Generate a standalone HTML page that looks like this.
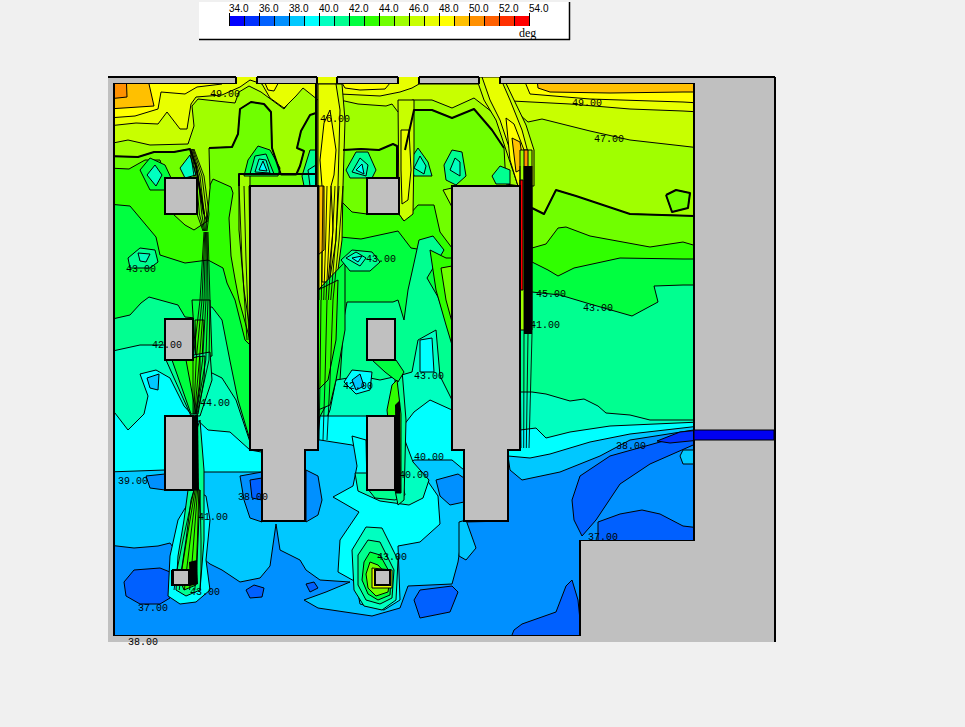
<!DOCTYPE html>
<html><head><meta charset="utf-8"><style>
html,body{margin:0;padding:0;background:#f0f0f0;width:965px;height:727px;overflow:hidden}
svg{position:absolute;left:0;top:0}
text{font-family:"Liberation Mono",monospace;font-size:10px;fill:#000}
.leg text{font-family:"Liberation Sans",sans-serif;font-size:10px}
</style></head><body>
<svg width="965" height="727" viewBox="0 0 965 727">
<defs><clipPath id="pc"><path d="M114 77H694V541H580V636H114Z"/></clipPath></defs>
<!-- legend -->
<rect x="199" y="2" width="370" height="37" fill="#fff"/>
<line x1="199" y1="39.5" x2="570" y2="39.5" stroke="#000" stroke-width="1.5"/>
<line x1="569.5" y1="2" x2="569.5" y2="40" stroke="#000" stroke-width="1.5"/>
<g shape-rendering="crispEdges">
<rect x="229" y="16" width="15" height="10" fill="#0000ff"/>
<rect x="244" y="16" width="15" height="10" fill="#0030ff"/>
<rect x="259" y="16" width="15" height="10" fill="#0060ff"/>
<rect x="274" y="16" width="15" height="10" fill="#0090ff"/>
<rect x="289" y="16" width="15" height="10" fill="#00c8ff"/>
<rect x="304" y="16" width="15" height="10" fill="#00ffff"/>
<rect x="319" y="16" width="15" height="10" fill="#00ffc0"/>
<rect x="334" y="16" width="15" height="10" fill="#00ff90"/>
<rect x="349" y="16" width="15" height="10" fill="#00ff40"/>
<rect x="364" y="16" width="15" height="10" fill="#30ff00"/>
<rect x="379" y="16" width="15" height="10" fill="#70ff00"/>
<rect x="394" y="16" width="15" height="10" fill="#a0ff00"/>
<rect x="409" y="16" width="15" height="10" fill="#c8ff00"/>
<rect x="424" y="16" width="15" height="10" fill="#e8ff00"/>
<rect x="439" y="16" width="15" height="10" fill="#ffff00"/>
<rect x="454" y="16" width="15" height="10" fill="#ffc000"/>
<rect x="469" y="16" width="15" height="10" fill="#ff9000"/>
<rect x="484" y="16" width="15" height="10" fill="#ff6000"/>
<rect x="499" y="16" width="15" height="10" fill="#ff3000"/>
<rect x="514" y="16" width="15" height="10" fill="#ff0000"/>
<path stroke="#000" stroke-width="1" d="M229.5 13V26M244.5 16V26M259.5 13V26M274.5 16V26M289.5 13V26M304.5 16V26M319.5 13V26M334.5 16V26M349.5 13V26M364.5 16V26M379.5 13V26M394.5 16V26M409.5 13V26M424.5 16V26M439.5 13V26M454.5 16V26M469.5 13V26M484.5 16V26M499.5 13V26M514.5 16V26M529.5 13V26"/>
</g>
<g class="leg">
<text x="229" y="12">34.0</text><text x="259" y="12">36.0</text><text x="289" y="12">38.0</text><text x="319" y="12">40.0</text><text x="349" y="12">42.0</text><text x="379" y="12">44.0</text><text x="409" y="12">46.0</text><text x="439" y="12">48.0</text><text x="469" y="12">50.0</text><text x="499" y="12">52.0</text><text x="529" y="12">54.0</text>
</g>
<text x="519" y="37" style="font-family:'Liberation Serif',serif;font-size:12px">deg</text>

<!-- plot -->
<rect x="108" y="78" width="667" height="564" fill="#c0c0c0"/>
<g clip-path="url(#pc)">
<rect x="114" y="77" width="580" height="559" fill="#30ff00"/>
<g stroke="#000" stroke-width="1" stroke-linejoin="round"><polygon fill="#70ff00" points="108,70 700,70 700,247 683,242 650,247 590,236 566,227 558,228 546,244 532,248 452,248 440,232 434,205 418,205 410,214 367,214 352,212 340,200 318,186 250,186 250,340 239,300 235,279 231,256 229,218 233,193 231,187 213,179 210,185 206,222 194,230 185,225 173,214 165,214 165,178 160,160 145,160 129,169 108,168"/>
<polygon fill="#a0ff00" points="108,70 700,70 700,216 630,214 600,204 576,196 556,190 544,214 532,208 532,260 528,300 520,300 520,186 506,184 504,148 492,130 474,109 452,118 432,110 414,110 405,150 412,170 411,205 404,221 399,214 399,178 397,178 397,146 393,144 379,150 361,149 343,150 341,168 340,230 336,260 326,300 318,312 318,186 316,186 316,113 310,115 301,131 297,148 304,151 300,166 296,175 281,175 277,163 272,148 271,112 264,104 251,102 240,109 238,134 232,147 209,148 210,188 207,222 204,214 200,190 196,166 190,149 174,152 154,152 138,157 108,156"/>
<polygon fill="#c8ff00" points="108,70 700,70 700,148 683,146 630,140 590,131 542,119 528,122 512,108 492,112 474,98 452,108 432,100 412,100 398,112 392,104 386,106 358,104 340,100 318,95 317,84 296,85 294,96 284,109 261,92 249,86 239,92 235,103 198,99 192,106 194,126 188,144 150,145 128,140 108,144"/>
<polygon fill="#e8ff00" points="108,70 700,70 700,112 683,111 630,109 570,104 512,101 500,95 490,90 480,84 419,84 412,88 400,92 380,96 340,94 318,100 303,88 296,96 284,108 270,98 262,84 250,80 240,87 222,95 196,97 191,104 187,129 180,129 167,112 158,124 136,123 108,126"/>
<polygon fill="#ffff00" points="108,70 220,70 222,84 197,87 185,94 161,92 158,109 135,116 108,118"/>
<polygon fill="#ffff00" points="338,76 396,76 385,89 360,90 345,88"/>
<polygon fill="#ffff00" points="262,76 282,76 274,91 268,90"/>
<polygon fill="#ffff00" points="520,70 700,70 700,103 683,102 590,99 530,94"/>
<polygon fill="#ffc000" points="108,70 150,70 149,84 154,106 108,109"/>
<polygon fill="#ffc000" points="536,70 700,70 700,92 683,92 610,93 550,92 538,88"/>
<polygon fill="#ff9000" points="108,70 126,70 127,97 108,99"/>
<polygon fill="#00ff40" points="108,204 130,206 156,237 160,255 185,263 208,260 223,268 227,283 235,300 245,340 250,345 318,300 340,237 361,239 398,231 411,248 417,249 438,260 452,262 520,262 532,262 548,270 558,276 574,268 620,258 683,259 700,259 700,640 108,640"/>
<polygon fill="#00ff90" points="108,320 130,315 141,303 149,297 178,305 185,317 196,318 200,308 212,307 222,320 230,361 238,400 250,440 318,420 340,380 344,318 347,302 393,302 398,300 404,320 408,290 414,263 419,240 433,236 444,250 427,278 438,297 446,320 452,340 520,292 532,292 560,295 590,304 632,316 658,302 654,286 683,285 700,285 700,640 108,640"/>
<polygon fill="#00ffc0" points="108,352 140,345 165,345 193,360 202,376 210,372 222,378 236,400 250,442 318,440 330,410 336,380 360,376 380,380 398,376 412,372 418,340 436,330 440,376 452,400 520,392 532,392 546,394 570,401 584,399 598,406 606,413 630,415 650,420 700,420 700,640 108,640"/>
<polygon fill="#00ffff" points="108,404 128,430 144,414 148,396 140,374 156,370 170,378 184,406 193,416 208,430 230,432 250,450 306,460 318,436 320,416 366,416 400,430 414,412 430,400 452,410 520,430 536,428 546,438 570,432 610,426 700,422 700,640 108,640"/>
<polygon fill="#00c8ff" points="108,472 165,470 193,472 230,472 262,472 306,440 320,440 352,445 400,470 414,460 452,460 464,470 508,456 530,458 550,454 590,442 630,434 700,426 700,640 108,640"/>
<polygon fill="#00ffff" points="352,436 366,440 367,490 395,490 400,480 420,470 438,496 440,524 420,542 398,546 400,600 384,610 360,604 356,582 338,572 340,540 359,512 333,497 353,486 357,466"/>
<polygon fill="#00ffc0" points="355,473 358,491 380,501 409,505 423,498 429,480 413,462 401,430 395,490 367,490 367,473"/>
<polygon fill="#00ff90" points="367,488 395,488 400,470 405,495 395,500 375,498"/>
<polygon fill="#0090ff" points="108,545 134,548 158,546 170,543 175,550 200,556 210,564 222,570 240,582 260,578 270,566 276,524 280,550 300,560 306,570 320,580 350,582 326,592 304,600 318,608 372,616 400,608 408,586 452,584 458,562 464,522 508,521 508,456 510,470 522,480 560,472 600,456 630,440 700,429 700,640 108,640"/>
<polygon fill="#0090ff" points="146,476 165,474 165,490 150,488"/>
<polygon fill="#0090ff" points="240,476 262,472 262,522 250,518 244,500"/>
<polygon fill="#0090ff" points="306,470 318,476 322,500 318,515 306,522"/>
<polygon fill="#0090ff" points="436,480 458,474 464,478 464,502 450,505 440,496"/>
<polygon fill="#00c8ff" points="459,522 466,520 476,548 466,560 459,556"/>
<polygon fill="#0060ff" points="124,582 134,570 160,568 170,572 170,598 160,604 140,604 126,596"/>
<polygon fill="#0060ff" points="246,590 254,585 264,588 262,597 250,598"/>
<polygon fill="#0060ff" points="250,480 262,478 262,500 252,498"/>
<polygon fill="#0060ff" points="414,600 420,590 452,586 458,592 450,612 420,618"/>
<polygon fill="#0060ff" points="306,584 314,582 318,588 310,592"/>
<polygon fill="#0060ff" points="572,500 580,476 610,456 660,442 700,431 700,442 650,464 620,484 596,520 582,536 574,520"/>
<polygon fill="#0060ff" points="598,522 620,514 642,510 660,514 683,526 700,528 700,545 598,545"/>
<polygon fill="#0060ff" points="510,640 514,630 522,624 556,612 566,586 572,580 578,600 582,640"/>
<polygon fill="#0030ff" points="657,441 680,432 700,430 700,440 670,443"/>
<polygon fill="#00c8ff" points="683,450 700,450 700,464 683,464 680,456"/>
<polygon fill="#00ffff" points="196,490 206,496 210,520 206,560 210,590 196,602 180,604 168,596 170,556 178,520 190,500"/>
<polygon fill="#00ff90" points="193,440 200,420 204,470 204,540 200,590 186,596 176,590 178,556 184,520 188,490"/>
<polygon fill="#00ff40" points="192,300 210,300 212,356 196,360"/>
<polygon fill="#30ff00" points="195,320 204,320 202,360 196,360"/>
<polygon fill="#00ff90" points="166,360 210,352 212,380 200,416 191,416"/>
<polygon fill="#00ff40" points="172,360 205,356 204,380 198,414 191,414"/>
<polygon fill="#30ff00" points="186,360 200,356 200,385 196,414"/>
<polygon fill="#30ff00" points="194,490 200,490 198,540 196,585 184,590 180,580 186,540 191,500"/>
<polygon fill="#00ff90" points="395,380 402,370 406,420 404,500 398,505 395,490"/>
<polygon fill="#00ff40" points="372,360 396,360 404,372 398,382 385,372"/>
<polygon fill="#00ffc0" points="366,527 382,528 398,560 396,600 382,610 364,606 354,590 352,550"/>
<polygon fill="#00ff90" points="368,540 380,542 394,570 392,598 380,604 366,600 358,585 358,555"/>
<polygon fill="#00ff40" points="370,552 380,555 391,575 390,595 378,600 368,594 362,580 364,562"/>
<polygon fill="#70ff00" points="370,562 378,565 390,578 388,592 376,596 368,588 366,574"/>
<polygon fill="#e8ff00" points="372,568 392,570 392,588 372,588"/>
<polygon fill="#c8ff00" points="318,84 342,84 345,120 343,186 342,240 334,300 318,310"/>
<polygon fill="#e8ff00" points="318,84 336,84 340,110 338,186 336,240 328,290 318,296"/>
<polygon fill="#ffff00" points="324,123 330,110 336,150 334,175 331,186 333,230 328,282 322,282 322,186 320,160"/>
<polygon fill="#ffc000" points="318,186 324,186 324,250 318,255"/>
<polygon fill="#30ff00" points="430,250 446,258 452,258 452,345 446,325 436,290"/>
<polygon fill="#70ff00" points="441,268 452,266 452,322 446,300"/>
<polygon fill="#a0ff00" points="443,190 452,188 452,207"/>
<polygon fill="#a0ff00" points="239,174 250,174 250,330 244,290 239,230"/>
<polygon fill="#00ff40" points="318,290 345,262 345,330 336,380 330,405 318,410"/>
<polygon fill="#30ff00" points="318,290 338,280 336,340 328,380 318,390"/>
<polygon fill="#70ff00" points="666,195 676,190 690,193 688,208 672,212"/>
<polygon fill="#00ff90" points="128,258 140,248 155,250 158,262 150,268 130,268"/>
<polygon fill="#00ffc0" points="138,253 150,254 146,262 140,261"/>
<polygon fill="#00ff40" points="140,170 150,158 165,165 172,180 165,190 150,190"/>
<polygon fill="#00ffc0" points="147,175 155,165 162,175 156,186"/>
<polygon fill="#00ffc0" points="180,168 190,155 196,175 185,178"/>
<polygon fill="#00ff40" points="244,176 248,160 258,146 270,150 280,168 278,176"/>
<polygon fill="#00ff90" points="250,174 255,156 266,154 274,174"/>
<polygon fill="#00ffc0" points="255,172 259,159 266,160 270,173"/>
<polygon fill="#00ffff" points="259,170 263,161 267,171"/>
<polygon fill="#00ff90" points="346,170 356,152 368,152 376,170 372,178 350,178"/>
<polygon fill="#00ffc0" points="352,172 360,158 368,165 366,176"/>
<polygon fill="#00ffff" points="356,170 362,164 364,174"/>
<polygon fill="#00ff90" points="410,160 418,148 428,162 432,176 414,176"/>
<polygon fill="#00ffc0" points="414,168 420,156 426,166 424,174"/>
<polygon fill="#00ff90" points="444,165 452,150 462,152 466,176 456,185 446,180"/>
<polygon fill="#00ffc0" points="450,170 455,158 460,162 460,176"/>
<polygon fill="#00ff90" points="302,176 310,150 316,150 316,186 304,186"/>
<polygon fill="#00ffc0" points="308,170 316,165 316,186 310,186"/>
<polygon fill="#00ff90" points="492,176 500,166 510,170 510,184 496,184"/>
<polygon fill="#00ff90" points="341,260 352,250 372,252 380,262 370,271 350,271"/>
<polygon fill="#00ffc0" points="346,258 356,252 366,258 360,266"/>
<polygon fill="#00ffff" points="352,258 362,256 358,262"/>
<polygon fill="#00c8ff" points="147,378 159,374 158,390 150,388"/>
<polygon fill="#00ffff" points="344,382 352,370 372,372 370,390 356,394"/>
<polygon fill="#00c8ff" points="352,380 360,374 364,386 356,390"/>
<polygon fill="#00ffff" points="420,340 432,338 434,372 420,372"/>
<polygon fill="#c8ff00" points="476,77 503,77 514,100 526,125 534,150 534,186 518,186 506,150 496,120 484,100"/>
<polygon fill="#e8ff00" points="482,77 500,77 510,100 522,130 530,160 530,186 518,186 510,150 500,120 490,100"/>
<polygon fill="#ffff00" points="506,118 514,124 524,150 526,186 518,186 510,160"/>
<polygon fill="#ffc000" points="512,138 520,142 524,168 516,172"/>
<polygon fill="#c8ff00" points="398,100 414,100 414,150 413,214 404,221 399,214"/>
<polygon fill="#e8ff00" points="401,130 409,130 411,170 408,200 402,204 401,170"/>
<polygon fill="#a0ff00" points="520,150 532,150 532,330 520,330"/>
<polygon fill="#ff9000" points="524,150 528,150 528,230 524,230"/>
<polygon fill="#ff0000" points="520,180 523,180 523,290 520,290"/>
<polygon fill="#30ff00" points="387,410 392,385 397,380 401,414 401,493 396,493"/></g>
<g fill="none" stroke="#000" stroke-width="0.9" stroke-linejoin="round">
<polyline points="190.0,149 194.0,176 197.0,214 203.0,231"/>
<polyline points="190.8,149 196.0,176 199.4,214 203.8,231"/>
<polyline points="191.6,149 198.0,176 201.8,214 204.6,231"/>
<polyline points="192.4,149 200.0,176 204.2,214 205.4,231"/>
<polyline points="193.2,149 202.0,176 206.6,214 206.2,231"/>
<polyline points="194.0,149 204.0,176 209.0,214 207.0,231"/>
<polyline points="319.0,186 319.0,240 319.0,300"/>
<polyline points="323.0,186 322.3,240 321.3,300"/>
<polyline points="327.0,186 325.7,240 323.7,300"/>
<polyline points="331.0,186 329.0,240 326.0,300"/>
<polyline points="335.0,186 332.3,240 328.3,300"/>
<polyline points="339.0,186 335.7,240 330.7,300"/>
<polyline points="343.0,186 339.0,240 333.0,300"/>
<polyline points="321.0,300 320.0,380 319.0,440"/>
<polyline points="327.0,300 325.0,380 323.0,440"/>
<polyline points="333.0,300 330.0,380 327.0,440"/>
<polyline points="204.0,232 200.0,300 193.0,360 193.0,414"/>
<polyline points="204.8,232 202.0,300 196.2,360 193.8,414"/>
<polyline points="205.6,232 204.0,300 199.4,360 194.6,414"/>
<polyline points="206.4,232 206.0,300 202.6,360 195.4,414"/>
<polyline points="207.2,232 208.0,300 205.8,360 196.2,414"/>
<polyline points="208.0,232 210.0,300 209.0,360 197.0,414"/>
<polyline points="194.0,490 183.0,540 177.0,570 174.0,590"/>
<polyline points="195.2,490 186.6,540 181.8,570 179.2,590"/>
<polyline points="196.4,490 190.2,540 186.6,570 184.4,590"/>
<polyline points="197.6,490 193.8,540 191.4,570 189.6,590"/>
<polyline points="198.8,490 197.4,540 196.2,570 194.8,590"/>
<polyline points="200.0,490 201.0,540 201.0,570 200.0,590"/>
<polyline points="520.0,166 520.0,334 521.0,448"/>
<polyline points="524.0,166 524.0,334 523.7,448"/>
<polyline points="528.0,166 528.0,334 526.3,448"/>
<polyline points="532.0,166 532.0,334 529.0,448"/>
<polyline points="239.0,186 242.0,260 247.0,340"/>
<polyline points="244.0,186 246.0,260 249.0,340"/>
<polyline points="249.0,186 250.0,260 251.0,340"/>
</g>
<polygon fill="#000" points="395,405 400,400 401,493 396,493"/>
<polygon fill="#000" points="193,416 198,414 199,490 194,490"/>
<polygon fill="#000" points="524,166 532,166 532,334 524,334"/>
<polygon fill="#000" points="189,562 197,560 198,584 190,586"/>
<polygon fill="#000" points="171,570 174,570 174,586 171,586"/>
<g fill="none" stroke="#000" stroke-width="2" stroke-linejoin="round">
<polyline points="108,156 138,157 154,152 174,152 190,149 196,166 200,190 204,214"/>
<polyline points="209,148 232,147 238,134 240,109 251,102 264,104 271,112 272,148 277,163 281,175"/>
<polyline points="296,175 300,166 304,151 297,148 301,131 310,115 316,113"/>
<polyline points="343,150 361,149 379,150 393,144 397,146 397,178"/>
<polyline points="405,150 414,110 432,110 452,118 474,109 492,130 504,148"/>
<polyline points="532,208 544,214 556,190 576,196 600,204 630,214 694,216"/>
<polyline points="666,195 676,190 690,193 688,208 672,212 666,195"/>
<polyline points="239,186 239,174 316,174"/>
<polyline points="316,77 316,186"/>
</g>
</g>
<g fill="#c0c0c0" shape-rendering="crispEdges"><rect x="108" y="77" width="128" height="6.5"/><rect x="257" y="77" width="60" height="6.5"/><rect x="337" y="77" width="61" height="6.5"/><rect x="419" y="77" width="60" height="6.5"/><rect x="500" y="77" width="275" height="6.5"/></g>
<!-- obstacles -->
<g fill="#c0c0c0" stroke="#000" stroke-width="1.5" shape-rendering="crispEdges">
<rect x="165" y="178" width="32" height="36"/>
<rect x="165" y="319" width="28" height="41"/>
<rect x="165" y="416" width="28" height="74"/>
<rect x="367" y="178" width="32" height="36"/>
<rect x="367" y="319" width="28" height="41"/>
<rect x="367" y="416" width="28" height="74"/>
<path d="M250 186H318V450H305V521H262V450H250Z"/>
<path d="M452 186H520V450H508V521H464V450H452Z"/>
<rect x="173" y="570" width="16" height="15"/>
<rect x="375" y="570" width="15" height="15"/>
</g>
<!-- frame lines -->
<g stroke="#000" fill="none" shape-rendering="crispEdges">
<path d="M108 77H236M257 77H317M337 77H398M419 77H479M500 77H775" stroke-width="2"/>
<path d="M774.5 77V642" stroke-width="2"/>
<path d="M114 83.5H236M257 83.5H317M337 83.5H398M419 83.5H479M500 83.5H694" stroke-width="1.5"/>
<path d="M236 77V84M257 77V84M317 77V84M337 77V84M398 77V84M419 77V84M479 77V84M500 77V84" stroke-width="1.5"/>
<path d="M113.8 83V636" stroke-width="1.5"/>
<path d="M113 635.5H580V540.5H694V83" stroke-width="1.5"/>
</g>
<rect x="236" y="78" width="21" height="6" fill="none"/>
<rect x="694" y="430" width="80" height="10" fill="#0000f0" stroke="#000" stroke-width="1"/>
<g font-size="10">
<text x="210" y="97">49.00</text>
<text x="572" y="106">49.00</text>
<text x="594" y="142">47.00</text>
<text x="320" y="122">46.00</text>
<text x="126" y="272">43.00</text>
<text x="152" y="348">42.00</text>
<text x="536" y="297">45.00</text>
<text x="583" y="311">43.00</text>
<text x="343" y="389">42.00</text>
<text x="414" y="379">43.00</text>
<text x="200" y="406">44.00</text>
<text x="414" y="460">40.00</text>
<text x="399" y="478">40.00</text>
<text x="118" y="484">39.00</text>
<text x="238" y="500">38.00</text>
<text x="198" y="520">41.00</text>
<text x="616" y="449">38.00</text>
<text x="190" y="595">43.00</text>
<text x="138" y="611">37.00</text>
<text x="128" y="645">38.00</text>
<text x="588" y="540">37.00</text>
<text x="377" y="560">43.00</text>
<text x="366" y="262">43.00</text>
<text x="530" y="328">41.00</text>
</g>
</svg>
</body></html>
